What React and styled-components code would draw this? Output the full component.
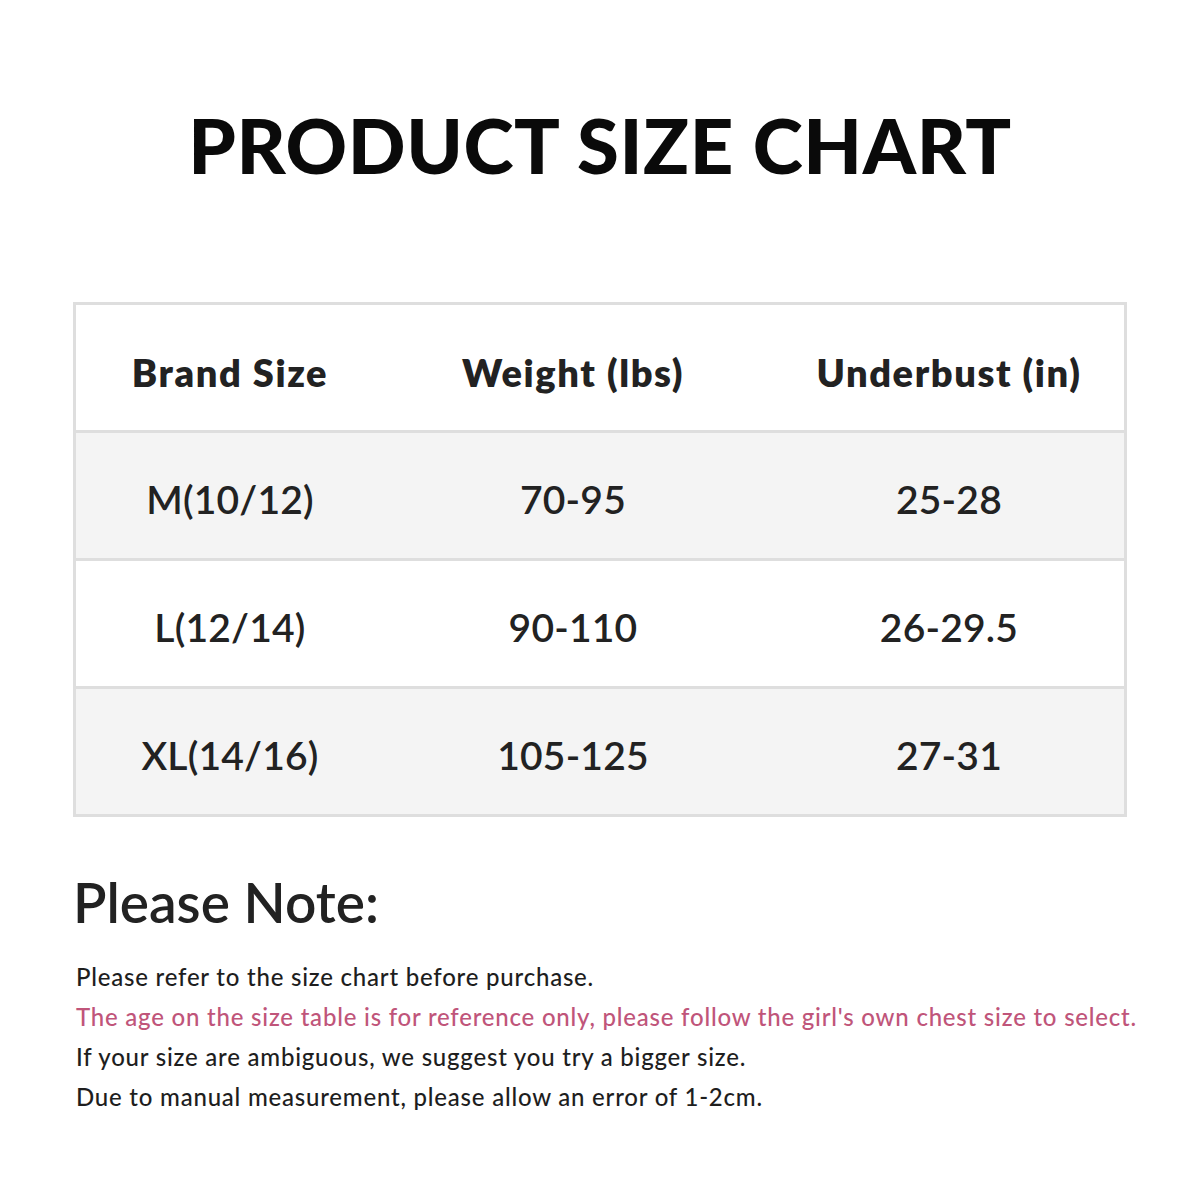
import React from 'react';
import styled, { createGlobalStyle } from 'styled-components';

const GlobalStyle = createGlobalStyle`
	html, body {
		margin: 0;
		padding: 0;
		background: #ffffff;
	}
	body {
		font-family: Lato, "Open Sans", "Liberation Sans", sans-serif;
	}
`;

const Page = styled.div`
	width: 1200px;
	height: 1200px;
	box-sizing: border-box;
	padding: 96px 73px 0 73px;
	background: #fff;
	overflow: hidden;
`;

const Title = styled.h1`
	margin: 0;
	height: 206px;
	text-align: center;
	font-size: 76px;
	font-weight: 900;
	line-height: 98px;
	color: #0a0a0a;
	letter-spacing: 0.6px;
`;

const Table = styled.div`
	width: 1054px;
	box-sizing: border-box;
	border: 3px solid #dedede;
`;

const Row = styled.div`
	display: grid;
	grid-template-columns: 308px 378px 1fr;
	align-items: center;
	height: 125px;
	background: ${p => (p.$shaded ? '#f4f4f4' : '#fff')};
	border-top: ${p => (p.$first ? 'none' : '3px solid #dedede')};
`;

const Cell = styled.div`
	text-align: center;
	font-size: ${p => (p.$head ? '38px' : '39px')};
	font-weight: ${p => (p.$head ? 800 : 600)};
	letter-spacing: ${p => (p.$head ? '1.6px' : '0.2px')};
	color: #222;
	padding-top: ${p => (p.$head ? '8px' : '6px')};
	padding-left: ${p => (p.$last ? '12px' : '0')};
`;

const Note = styled.section`
	padding-top: 49px;
`;

const NoteTitle = styled.h2`
	margin: 0 0 19px 0;
	font-size: 55px;
	font-weight: 600;
	line-height: 72px;
	color: #222;
`;

const NoteLine = styled.p`
	margin: 0;
	padding-left: 3px;
	font-size: 24px;
	font-weight: 500;
	line-height: 40px;
	letter-spacing: 0.78px;
	white-space: nowrap;
	color: ${p => (p.$accent ? '#c0557a' : '#1e1e1e')};
`;

const heads = ['Brand Size', 'Weight (lbs)', 'Underbust (in)'];

const rows = [
	['M(10/12)', '70-95', '25-28'],
	['L(12/14)', '90-110', '26-29.5'],
	['XL(14/16)', '105-125', '27-31'],
];

const notes = [
	{ text: 'Please refer to the size chart before purchase.' },
	{ text: "The age on the size table is for reference only, please follow the girl's own chest size to select.", accent: true },
	{ text: 'If your size are ambiguous, we suggest you try a bigger size.' },
	{ text: 'Due to manual measurement, please allow an error of 1-2cm.' },
];

export default function App() {
	return (
		<Page>
			<GlobalStyle />
			<Title>PRODUCT SIZE CHART</Title>
			<Table>
				<Row $first>
					{heads.map((h, j) => (
						<Cell key={h} $head $last={j === 2}>{h}</Cell>
					))}
				</Row>
				{rows.map((r, i) => (
					<Row key={r[0]} $shaded={i % 2 === 0}>
						{r.map((v, j) => <Cell key={v} $last={j === 2}>{v}</Cell>)}
					</Row>
				))}
			</Table>
			<Note>
				<NoteTitle>Please Note:</NoteTitle>
				{notes.map(n => (
					<NoteLine key={n.text} $accent={n.accent}>{n.text}</NoteLine>
				))}
			</Note>
		</Page>
	);
}
